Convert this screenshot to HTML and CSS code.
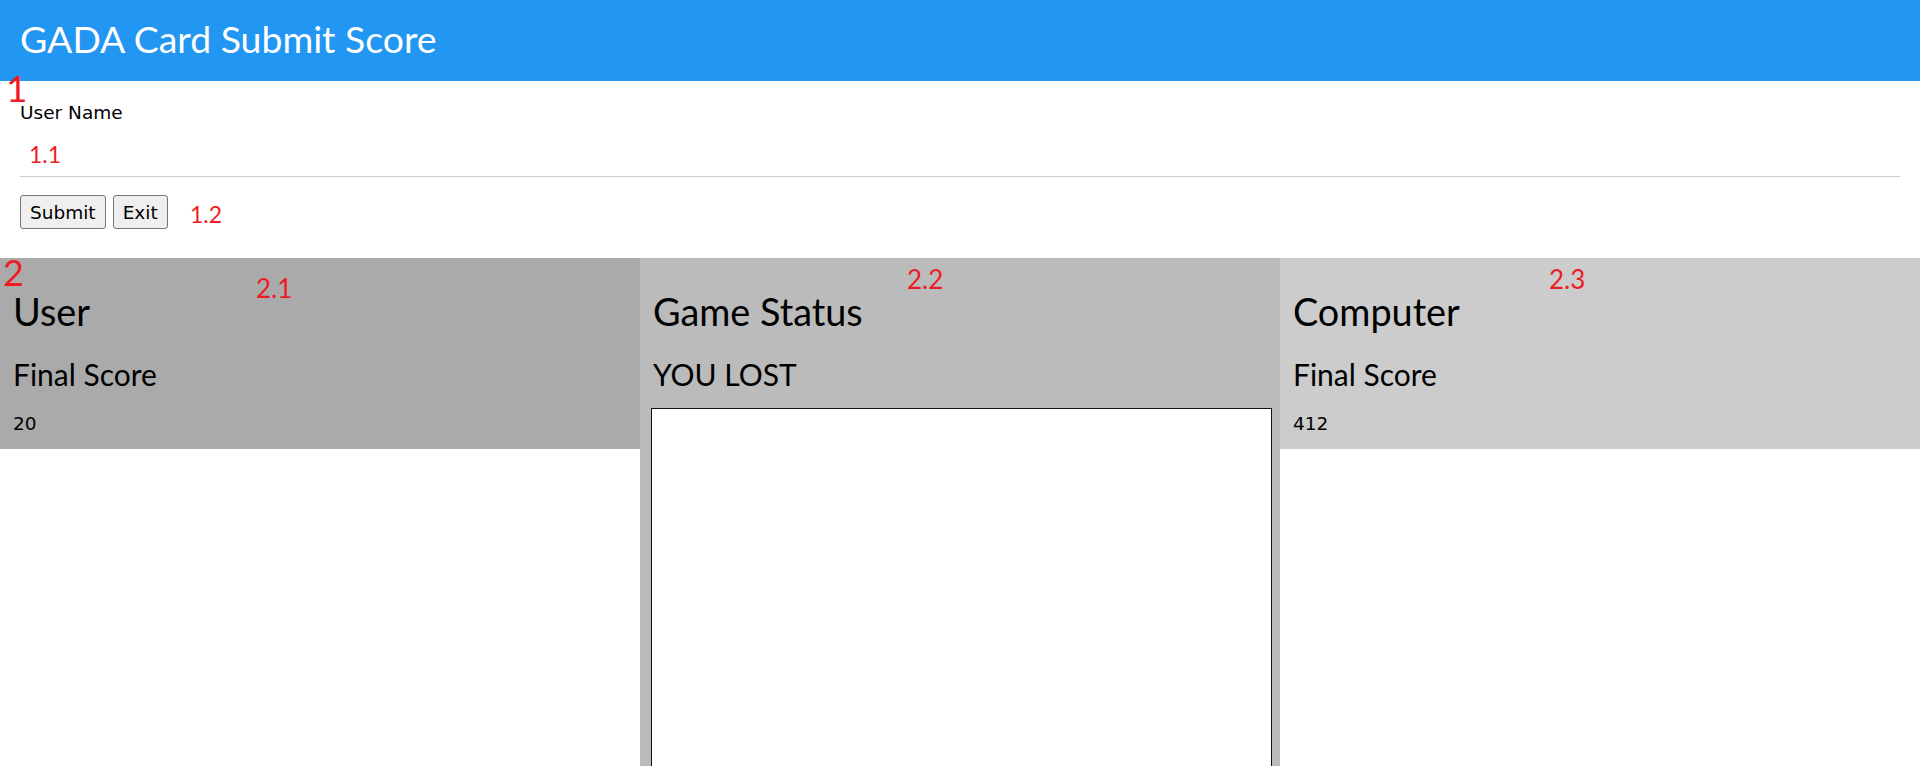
FILE: index.html
```html
<!DOCTYPE html>
<html lang="en">
<head>
<meta charset="utf-8">
<title>GADA Card Submit Score</title>
<link rel="stylesheet" href="styles.css">
</head>
<body>
<div class="app">
  <header class="topbar">
    <h1 class="topbar-title">GADA Card Submit Score</h1>
  </header>

  <section class="form">
    <label class="field-label" for="username">User Name</label>
    <input class="field-input" id="username" type="text">
    <div class="actions">
      <button class="btn" type="button">Submit</button>
      <button class="btn" type="button">Exit</button>
    </div>
  </section>

  <section class="panels">
    <div class="panel panel-user">
      <h2 class="panel-title">User</h2>
      <h3 class="panel-sub">Final Score</h3>
      <p class="panel-value">20</p>
    </div>
    <div class="panel panel-status">
      <h2 class="panel-title">Game Status</h2>
      <h3 class="panel-sub">YOU LOST</h3>
      <textarea class="status-log"></textarea>
    </div>
    <div class="panel panel-computer">
      <h2 class="panel-title">Computer</h2>
      <h3 class="panel-sub">Final Score</h3>
      <p class="panel-value">412</p>
    </div>
  </section>

  <span class="mark mark-1">1</span>
  <span class="mark mark-11">1.1</span>
  <span class="mark mark-12">1.2</span>
  <span class="mark mark-2">2</span>
  <span class="mark mark-21">2.1</span>
  <span class="mark mark-22">2.2</span>
  <span class="mark mark-23">2.3</span>
</div>
</body>
</html>
```

FILE: styles.css
```css
html, body {
  margin: 0;
  padding: 0;
  background: #fff;
}

.app {
  position: relative;
  font-family: "DejaVu Sans", sans-serif;
  color: #000;
}

.topbar {
  background: #2196f3;
  height: 81px;
  box-sizing: border-box;
  padding: 17px 20px 0;
}

.topbar-title {
  margin: 0;
  font-family: Lato, "Open Sans", sans-serif;
  font-weight: 400;
  font-size: 37.4px;
  line-height: 44px;
  color: #fff;
}

.form {
  padding: 0 20px;
}

.field-label {
  display: block;
  margin-top: 21px;
  font-size: 18.5px;
  line-height: 21px;
}

.field-input {
  display: block;
  width: 100%;
  box-sizing: border-box;
  height: 54px;
  margin: 0;
  padding: 0;
  border: 0;
  border-bottom: 1px solid #cccccc;
  background: transparent;
  outline: none;
  font-size: 18.5px;
  font-family: "DejaVu Sans", sans-serif;
}

.actions {
  display: flex;
  gap: 7px;
  margin-top: 18px;
}

.btn {
  box-sizing: border-box;
  height: 34px;
  margin: 0;
  padding: 0 9px;
  font-family: "DejaVu Sans", sans-serif;
  font-size: 18.5px;
  line-height: 21px;
  color: #000;
  background: #efefef;
  border: 1px solid #767676;
  border-radius: 3px;
}

.panels {
  display: flex;
  align-items: flex-start;
  margin-top: 29px;
}

.panel {
  flex: 1 1 0;
  min-width: 0;
  box-sizing: border-box;
  padding: 32px 8px 15px 13px;
}

.panel-user { background: #aaaaaa; }
.panel-status { background: #bbbbbb; height: 508px; }
.panel-computer { background: #cccccc; }

.panel-title {
  margin: 0;
  font-family: Lato, "Open Sans", sans-serif;
  font-weight: 400;
  font-size: 37.8px;
  line-height: 44px;
}

.panel-sub {
  margin: 22px 0 0;
  font-family: Lato, "Open Sans", sans-serif;
  font-weight: 400;
  font-size: 30px;
  line-height: 36px;
}

.panel-value {
  margin: 21px 0 0;
  font-size: 18.5px;
  line-height: 21px;
}

.status-log {
  display: block;
  box-sizing: border-box;
  width: 621px;
  height: 380px;
  margin: 16px 0 0 -2px;
  padding: 2px;
  border: 1px solid #111;
  background: #fff;
  resize: none;
}

.mark {
  position: absolute;
  color: #ed1c24;
  font-family: Lato, "Open Sans", sans-serif;
  font-weight: 400;
  line-height: 1;
  white-space: nowrap;
}

.mark-1 { font-size: 37px; top: 69px; left: 6px; }
.mark-11 { font-size: 23px; top: 143px; left: 29px; }
.mark-12 { font-size: 23px; top: 203px; left: 190px; }
.mark-2 { font-size: 36px; top: 254px; left: 3px; }
.mark-21 { font-size: 26px; top: 275px; left: 256px; }
.mark-22 { font-size: 26px; top: 266px; left: 907px; }
.mark-23 { font-size: 26px; top: 266px; left: 1549px; }
```
